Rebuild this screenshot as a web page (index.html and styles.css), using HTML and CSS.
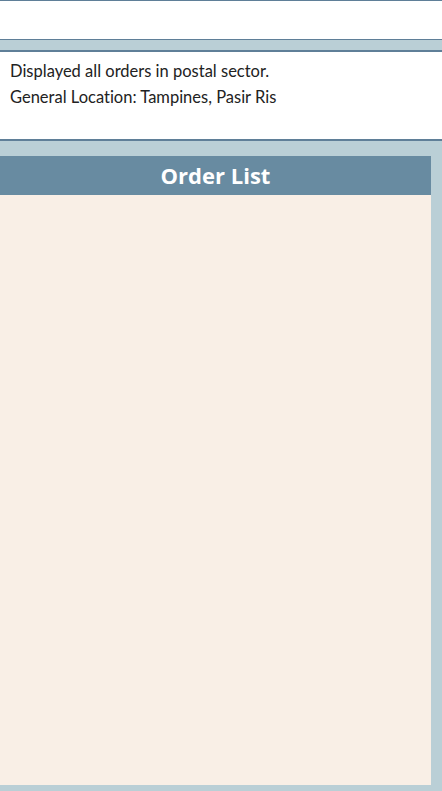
FILE: index.html
```html
<!DOCTYPE html>
<html>
<head>
<meta charset="utf-8">
<link rel="stylesheet" href="styles.css">
</head>
<body>
<div class="topbar"></div>
<div class="band"></div>
<div class="info">
  <p class="line">Displayed all orders in postal sector.</p>
  <p class="line">General Location: Tampines, Pasir Ris</p>
</div>
<div class="orders">
  <div class="orders-head">Order List</div>
  <div class="orders-body"></div>
</div>
</body>
</html>
```
FILE: styles.css
```css
html, body {
  margin: 0;
  padding: 0;
}
body {
  width: 442px;
  height: 791px;
  background: #bacfd6;
  overflow: hidden;
  font-family: Lato, "Open Sans", sans-serif;
}
.topbar {
  height: 38px;
  background: #ffffff;
  border-top: 1px solid #5f7f98;
  border-bottom: 1px solid #5f7f98;
}
.band {
  height: 10px;
}
.info {
  box-sizing: border-box;
  height: 91px;
  background: #ffffff;
  border-top: 2px solid #5f7f98;
  border-bottom: 2px solid #5f7f98;
  padding: 6px 10px 0;
}
.line {
  margin: 0;
  font-size: 16.5px;
  font-weight: 400;
  line-height: 26px;
  color: #222222;
  font-variant-ligatures: none;
}
.orders {
  margin: 15px 11px 0 0;
  display: flex;
  flex-direction: column;
  height: 629px;
}
.orders-head {
  height: 39px;
  background: #688ba1;
  color: #ffffff;
  font-family: "Open Sans", sans-serif;
  font-weight: 700;
  font-size: 22px;
  line-height: 39px;
  text-align: center;
}
.orders-body {
  flex: 1;
  background: #f9efe6;
}
```
